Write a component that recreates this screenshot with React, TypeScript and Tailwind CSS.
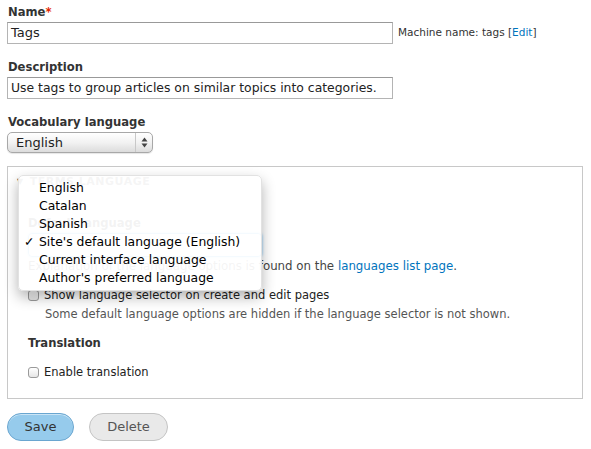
import React from 'react';

const font = { fontFamily: '"DejaVu Sans", "Noto Sans", sans-serif' };

function Checkbox() {
  return (
    <span className="inline-block w-[11px] h-[11px] rounded-[3px] border border-[#9a9a9a] bg-gradient-to-b from-white to-[#e6e6e6] mr-[5px] shrink-0" />
  );
}

export default function App() {
  return (
    <div className="w-[591px] h-[449px] bg-white text-[#333] pl-[7px] pt-[4px] text-[11.6px] font-['DejaVu_Sans',sans-serif] overflow-hidden">
      {/* Name */}
      <div className="font-bold leading-[16px] pl-[1px]">
        Name<span className="text-[#e32700]">*</span>
      </div>
      <div className="flex items-center mt-[2px]">
        <div className="w-[386px] h-[22px] border border-[#b4b4b4] border-t-[#999] px-[3px] flex items-center text-[13px] text-[#222]">
          Tags
        </div>
        <span className="ml-[5px] text-[10.5px] text-[#333]">
          Machine name: tags [<span className="text-[#0074bd]">Edit</span>]
        </span>
      </div>

      {/* Description */}
      <div className="font-bold leading-[16px] pl-[1px] mt-[15px]">Description</div>
      <div className="w-[386px] h-[22px] border border-[#b4b4b4] border-t-[#999] px-[3px] flex items-center text-[12.4px] text-[#222] mt-[2px] whitespace-nowrap overflow-hidden">
        Use tags to group articles on similar topics into categories.
      </div>

      {/* Vocabulary language */}
      <div className="font-bold leading-[16px] pl-[1px] mt-[15px]">Vocabulary language</div>
      <div className="mt-[2px] w-[146px] h-[21px] rounded-[5px] border border-[#a8a8a8] bg-gradient-to-b from-white via-[#f2f2f2] to-[#dcdcdc] flex items-center text-[13px] text-[#222] shadow-[0_1px_1px_rgba(0,0,0,0.1)]">
        <span className="flex-1 pl-[8px]">English</span>
        <span className="w-[17px] h-full border-l border-[#c8c8c8] flex items-center justify-center">
          <svg width="7" height="11" viewBox="0 0 7 11">
            <path d="M3.5 0.5 L6.5 4.5 L0.5 4.5 Z" fill="#444" />
            <path d="M3.5 10.5 L6.5 6.5 L0.5 6.5 Z" fill="#444" />
          </svg>
        </span>
      </div>

      {/* Fieldset */}
      <div className="relative mt-[13px] w-[576px] h-[233px] border border-[#c8c8c8] pt-[8px] pl-[9px]">
        <div className="flex items-center font-bold text-[11px] text-[#555] uppercase tracking-[0.5px] leading-[14px]">
          <span className="text-[8px] mr-[6px]">▼</span>Terms language
        </div>
        <div className="pl-[11px] mt-[26px]">
          <div className="font-bold leading-[16px]">Default language</div>
          <div className="mt-[2px] w-[234px] h-[24px] rounded-[4px] border border-[#4aa8ea] shadow-[0_0_3px_#6bbcf5]" />
          <div className="mt-[1px] leading-[16px] text-[11.8px] text-[#444]">
            Explanation of the language options is found on the{' '}
            <span className="text-[#0074bd]">languages list page</span>.
          </div>
          <div className="flex items-center mt-[13px] leading-[16px] text-[11.5px] text-[#222]">
            <Checkbox />
            Show language selector on create and edit pages
          </div>
          <div className="pl-[17px] mt-[3px] leading-[16px] text-[11.5px] text-[#555]">
            Some default language options are hidden if the language selector is not shown.
          </div>
        </div>
        <div className="font-bold leading-[16px] mt-[13px] pl-[11px]">Translation</div>
        <div className="flex items-center mt-[13px] leading-[16px] text-[11.5px] text-[#222] pl-[11px]">
          <Checkbox />
          Enable translation
        </div>

        {/* Open dropdown menu */}
        <div
          className="absolute left-[10px] top-[8px] w-[244px] h-[116px] rounded-[5px] bg-white/[0.94] border border-[#e2e2e2] shadow-[0_6px_14px_rgba(0,0,0,0.3)] pt-[3px] text-[12.4px] text-black"
          style={font}
        >
          {['English', 'Catalan', 'Spanish', "Site's default language (English)", 'Current interface language', "Author's preferred language"].map((item, i) => (
            <div key={item} className="relative h-[18px] leading-[18px] pl-[20px]">
              {i === 3 && <span className="absolute left-[5px] top-0">✓</span>}
              {item}
            </div>
          ))}
        </div>
      </div>

      {/* Actions */}
      <div className="flex items-center gap-[15px] mt-[14px]">
        <button className="w-[67px] h-[28px] rounded-full bg-[#96cbec] border border-[#6aa6d0] text-[13px] text-[#333] shadow-[inset_0_1px_0_rgba(255,255,255,0.5)]">
          Save
        </button>
        <button className="w-[79px] h-[28px] rounded-full bg-[#e9e9e9] border border-[#c4c4c4] text-[13px] text-[#555]">
          Delete
        </button>
      </div>
    </div>
  );
}
